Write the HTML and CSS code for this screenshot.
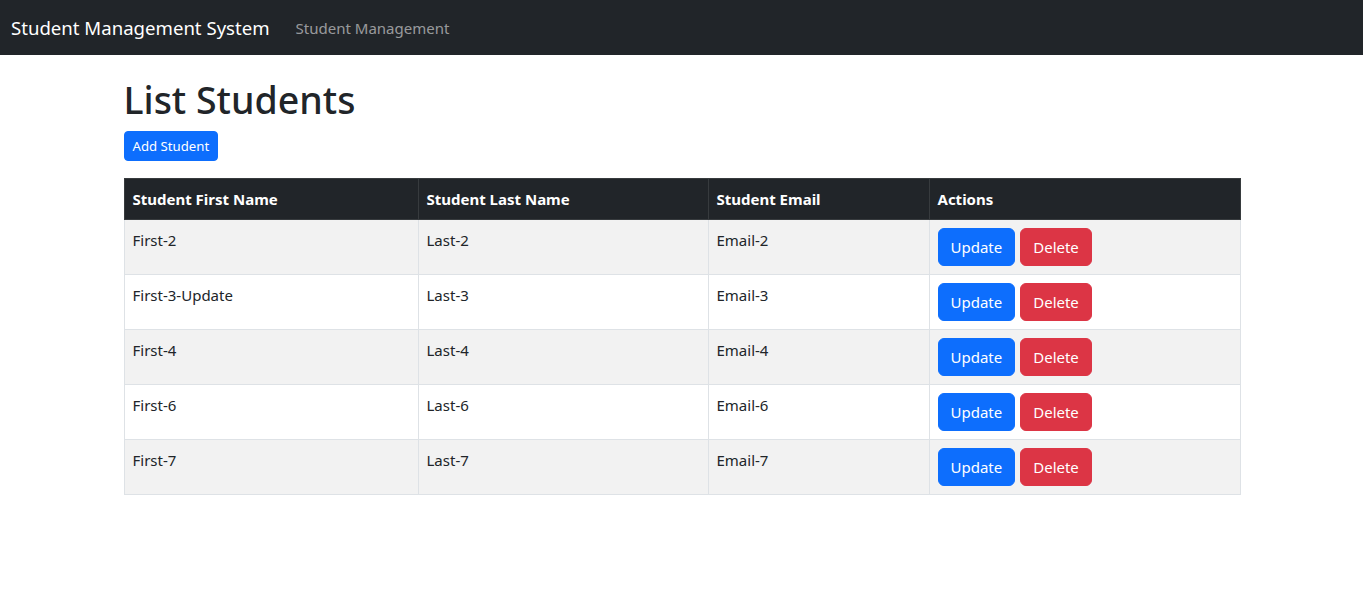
FILE: index.html
```html
<!DOCTYPE html>
<html lang="en">
<head>
<meta charset="utf-8">
<title>Student Management System</title>
<link rel="stylesheet" href="styles.css">
</head>
<body>
<header class="navbar">
  <a class="brand" href="#">Student Management System</a>
  <a class="nav-link" href="#">Student Management</a>
</header>
<main class="container">
  <h1 class="title">List Students</h1>
  <div class="toolbar">
    <a class="btn btn-primary btn-sm" href="#">Add Student</a>
  </div>
  <table class="table">
    <thead>
      <tr>
        <th class="c1">Student First Name</th>
        <th class="c2">Student Last Name</th>
        <th class="c3">Student Email</th>
        <th class="c4">Actions</th>
      </tr>
    </thead>
    <tbody>
      <tr>
        <td>First-2</td><td>Last-2</td><td>Email-2</td>
        <td><a class="btn btn-primary" href="#">Update</a><a class="btn btn-danger" href="#">Delete</a></td>
      </tr>
      <tr>
        <td>First-3-Update</td><td>Last-3</td><td>Email-3</td>
        <td><a class="btn btn-primary" href="#">Update</a><a class="btn btn-danger" href="#">Delete</a></td>
      </tr>
      <tr>
        <td>First-4</td><td>Last-4</td><td>Email-4</td>
        <td><a class="btn btn-primary" href="#">Update</a><a class="btn btn-danger" href="#">Delete</a></td>
      </tr>
      <tr>
        <td>First-6</td><td>Last-6</td><td>Email-6</td>
        <td><a class="btn btn-primary" href="#">Update</a><a class="btn btn-danger" href="#">Delete</a></td>
      </tr>
      <tr>
        <td>First-7</td><td>Last-7</td><td>Email-7</td>
        <td><a class="btn btn-primary" href="#">Update</a><a class="btn btn-danger" href="#">Delete</a></td>
      </tr>
    </tbody>
  </table>
</main>
</body>
</html>
```
FILE: styles.css
```css
* { box-sizing: border-box; }
html, body { margin: 0; }
body {
  font-family: "Noto Sans", "Open Sans", sans-serif;
  font-size: 15px;
  line-height: 24px;
  color: #212529;
  background: #fff;
}
a { text-decoration: none; }

.navbar {
  display: flex;
  align-items: center;
  height: 55px;
  padding: 0 11px;
  background: #212529;
}
.brand {
  font-size: 18.6px;
  line-height: 30px;
  color: #fff;
  margin-right: 18px;
}
.nav-link {
  padding: 0 8px;
  font-size: 15px;
  color: rgba(255, 255, 255, 0.55);
}

.container {
  width: 1116px;
  margin: 0 auto;
}
.title {
  margin: 22px 0 9px;
  font-size: 37.5px;
  line-height: 45px;
  font-weight: 500;
}
.toolbar { display: flex; }

.btn {
  display: inline-block;
  border: 1px solid transparent;
  border-radius: 6px;
  padding: 6px 12px;
  font-size: 15px;
  line-height: 24px;
  color: #fff;
  text-align: center;
}
.btn-sm {
  padding: 4px 8px;
  font-size: 13.2px;
  line-height: 20px;
  border-radius: 4px;
}
.btn-primary { background: #0d6efd; border-color: #0d6efd; }
.btn-danger { background: #dc3545; border-color: #dc3545; margin-left: 5px; }

.table {
  width: 100%;
  margin-top: 17px;
  border-collapse: collapse;
  table-layout: fixed;
}
.table th, .table td {
  padding: 8px;
  border: 1px solid #dee2e6;
  text-align: left;
  vertical-align: top;
}
.table thead th {
  background: #212529;
  color: #fff;
  font-weight: 700;
  border-color: #373b3e;
}
.table tbody tr:nth-child(odd) td { background: #f2f2f2; }
.c1 { width: 294px; }
.c2 { width: 290px; }
.c3 { width: 221px; }
.c4 { width: 311px; }
```
